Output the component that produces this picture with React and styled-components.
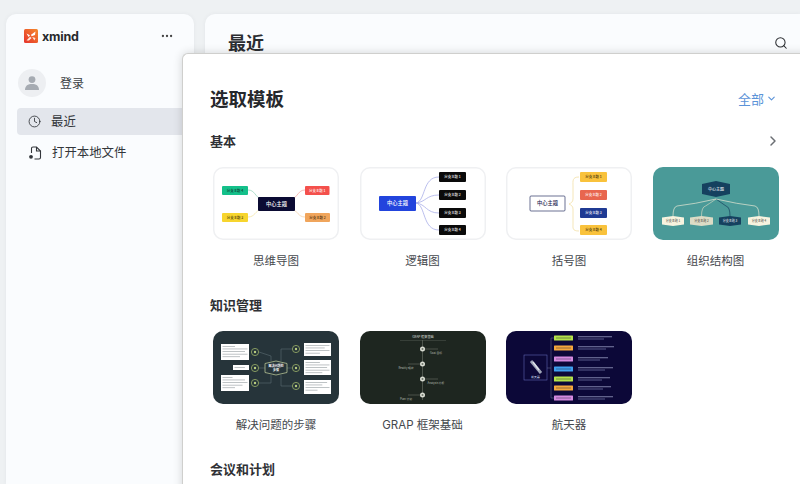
import React from 'react';
import styled, { createGlobalStyle } from 'styled-components';
import { Clock, MoreHorizontal, Search, ChevronDown, ChevronRight } from 'lucide-react';

const GlobalStyle = createGlobalStyle`
  html, body {
    margin: 0;
    padding: 0;
    height: 100%;
    overflow: hidden;
    background: #eef1f3;
    font-family: Inter, "Noto Sans CJK SC", sans-serif;
  }
`;

const Page = styled.div`
  position: relative;
  display: flex;
  gap: 11px;
  width: 800px;
  height: 484px;
  padding: 14px 0 0 6px;
  box-sizing: border-box;
  overflow: hidden;
`;

const Sidebar = styled.aside`
  flex: 0 0 188px;
  padding: 15px 0 0 11px;
  box-sizing: border-box;
  background: #fafcfe;
  border-radius: 10px 10px 0 0;
  box-shadow: 0 0 4px rgba(60, 70, 80, 0.06);
`;

const LogoRow = styled.div`
  display: flex;
  align-items: center;
  height: 14px;
  padding-left: 7px;
`;

const Wordmark = styled.span`
  margin-left: 4px;
  font: 700 12.5px Inter, sans-serif;
  letter-spacing: -0.2px;
  color: #26282c;
`;

const MoreButton = styled.span`
  display: flex;
  margin-left: auto;
  margin-right: 20px;
  color: #444;
`;

const UserRow = styled.div`
  display: flex;
  align-items: center;
  gap: 14px;
  margin: 26px 0 11px 1px;
  font-size: 12px;
  color: #3c3f44;
`;

const Avatar = styled.span`
  display: flex;
  align-items: center;
  justify-content: center;
  width: 28px;
  height: 28px;
  border-radius: 50%;
  background: #edeff2;
`;

const RowLabel = styled.span`
  margin-bottom: 2px;
`;

const NavItem = styled.div`
  display: flex;
  align-items: center;
  gap: 10px;
  height: 27px;
  margin-bottom: 4px;
  padding-left: 11px;
  border-radius: 4px 0 0 4px;
  font-size: 12.4px;
  color: #33363b;
  background: ${(p) => (p.$active ? '#e3e6ec' : 'transparent')};
`;

const Main = styled.main`
  flex: 1;
  display: flex;
  justify-content: space-between;
  padding: 15px 12px 0 23px;
  background: #fafcfe;
  border-radius: 10px 0 0 0;
  box-shadow: 0 0 4px rgba(60, 70, 80, 0.06);
`;

const MainTitle = styled.h1`
  margin: 1px 0 0;
  font-size: 18px;
  line-height: 28px;
  font-weight: 700;
  color: #2b2d31;
`;

const SearchButton = styled.span`
  display: flex;
  margin-top: 7px;
  color: #2b2d31;
`;

const Dialog = styled.section`
  position: absolute;
  left: 182px;
  top: 53px;
  width: 640px;
  height: 460px;
  padding: 30px 0 0 27px;
  box-sizing: border-box;
  background: #fff;
  border-radius: 6px 0 0 0;
  border: 1px solid #cfcfcd;
  border-width: 1px 0 0 1px;
  box-shadow: 0 0 10px rgba(0, 0, 0, 0.16);
`;

const DialogHead = styled.div`
  display: flex;
  align-items: center;
  justify-content: space-between;
  width: 567px;
  height: 28px;
  margin-bottom: 19px;
`;

const DialogTitle = styled.h2`
  margin: 0;
  font-size: 18.5px;
  font-weight: 700;
  color: #26282c;
`;

const AllFilter = styled.span`
  display: flex;
  align-items: center;
  gap: 2px;
  font-size: 13px;
  color: #5b93d8;
`;

const SectionHead = styled.div`
  display: flex;
  align-items: center;
  justify-content: space-between;
  width: 571px;
  height: 20px;
  margin-bottom: 16px;
`;

const SectionTitle = styled.h3`
  margin: 0;
  font-size: 13px;
  line-height: 20px;
  font-weight: 700;
  color: #2f3135;
`;

const MoreArrow = styled.span`
  display: flex;
  color: #6b6e73;
`;

const CardGrid = styled.div`
  display: grid;
  grid-template-columns: repeat(4, 126px);
  column-gap: 20.5px;
  margin: 0 0 25px 3px;
`;

const Card = styled.div`
  display: flex;
  flex-direction: column;
  align-items: center;
`;

const Thumb = styled.div`
  display: flex;
  width: 126px;
  height: 73px;
  margin-bottom: 12px;
  border-radius: 10px;
  overflow: hidden;
  background: ${(p) => p.$bg || '#fff'};
  box-shadow: ${(p) => (p.$bg ? 'none' : 'inset 0 0 0 1.5px #eff0f2')};
`;

const CardName = styled.span`
  font-size: 11.5px;
  line-height: 18px;
  color: #45484d;
`;

const Diagram = ({ children }) => (
  <svg width="100%" height="100%" viewBox="0 -1 126 73" fontFamily='"Noto Sans CJK SC", sans-serif'>
    {children}
  </svg>
);

const Topic = ({ x, y, w, h, fill, color, size = 3.4, r = 1, label, stroke }) => (
  <g>
    <rect x={x} y={y} width={w} height={h} rx={r} fill={fill} stroke={stroke} strokeWidth={stroke ? 0.7 : 0} />
    <text x={x + w / 2} y={y + h / 2 + size * 0.36} fontSize={size} fill={color} textAnchor="middle" fontWeight="500">
      {label}
    </text>
  </g>
);

const Hex = ({ x, y, w, h, fill, stroke, cut = 2 }) => (
  <polygon
    points={`${x},${y + cut} ${x + w / 2},${y} ${x + w},${y + cut} ${x + w},${y + h - cut} ${x + w / 2},${y + h} ${x},${y + h - cut}`}
    fill={fill}
    stroke={stroke}
    strokeWidth={stroke ? 0.7 : 0}
  />
);

const MindMap = () => (
  <Diagram>
    <g fill="none" strokeWidth="0.7">
      <path d="M35 22 C42 22 42 29 48 31" stroke="#8fd3b8" />
      <path d="M92 22 C85 22 85 29 79 31" stroke="#f2a09a" />
      <path d="M35 49 C42 49 42 43 48 41" stroke="#f3e29a" />
      <path d="M92 49 C85 49 85 43 79 41" stroke="#f3cda0" />
    </g>
    <Topic x={45} y={29} w={37} h={14} fill="#0b0b33" color="#fff" size={5.2} label="中心主题" />
    <Topic x={9} y={18} w={26} h={9} fill="#14c08a" color="#10332a" label="分支主题 4" />
    <Topic x={92} y={18} w={24.5} h={9} fill="#f4504c" color="#fff" label="分支主题 1" />
    <Topic x={9} y={45} w={26} h={9} fill="#f7d52e" color="#3a3208" label="分支主题 3" />
    <Topic x={92} y={45} w={25} h={9} fill="#f0a55c" color="#3c2608" label="分支主题 2" />
  </Diagram>
);

const LogicChart = () => (
  <Diagram>
    <g fill="none" stroke="#a9aee8" strokeWidth="0.8">
      <path d="M56 35 C66 33 62 9 79 9" />
      <path d="M56 35 C66 34 66 27 79 27" />
      <path d="M56 35 C66 36 66 45 79 45" />
      <path d="M56 35 C66 37 62 62 79 62" />
    </g>
    <Topic x={19} y={28} w={37} h={15} fill="#2244dd" color="#fff" size={5.2} label="中心主题" />
    {[1, 2, 3, 4].map((n, i) => (
      <Topic key={n} x={79} y={[4, 22, 40, 57][i]} w={27} h={10} fill="#0a0a0a" color="#fff" label={`分支主题 ${n}`} />
    ))}
  </Diagram>
);

const BraceMap = () => (
  <Diagram>
    <path d="M73 9 C66 9 67 13 67 18 L67 31 C67 34 65 35 63 36 C65 37 67 38 67 41 L67 56 C67 60 66 63 73 63" fill="none" stroke="#f3dfa6" strokeWidth="0.8" />
    <Topic x={24} y={28} w={35} h={15} fill="#fff" stroke="#2c3566" color="#1c2450" size={5.2} label="中心主题" />
    <Topic x={74} y={4} w={27} h={10} fill="#f9c23c" color="#3a2c08" label="分支主题 1" />
    <Topic x={74} y={22} w={27} h={10} fill="#e8664f" color="#fff" label="分支主题 2" />
    <Topic x={74} y={40} w={27} h={10} fill="#1f3a93" color="#fff" label="分支主题 3" />
    <Topic x={74} y={57} w={27} h={10} fill="#f9c23c" color="#3a2c08" label="分支主题 4" />
  </Diagram>
);

const orgNodes = [
  { x: 9, w: 22, fill: '#f7f3df', color: '#333', n: 1, line: '#e8e8d4' },
  { x: 37, w: 23, fill: '#dcdcc6', color: '#333', n: 2, line: '#cfd6c0' },
  { x: 66, w: 22, fill: '#15415f', color: '#fff', n: 3, line: '#15415f' },
  { x: 95, w: 22, fill: '#f7f3df', color: '#333', n: 4, line: '#e8e8d4' },
];

const OrgChart = () => (
  <Diagram>
    <g fill="none" strokeWidth="0.7">
      {orgNodes.map((o) => {
        const cx = o.x + o.w / 2;
        return <path key={o.n} d={`M63 31 Q${(63 + cx) / 2} 36 ${cx + (cx < 63 ? 4 : -4)} 38 Q${cx} 39 ${cx} 48`} stroke={o.line} />;
      })}
    </g>
    <Hex x={49} y={13} w={28} h={16} fill="#15415f" cut={3} />
    <text x={63} y={22.8} fontSize={4} fill="#fff" textAnchor="middle">中心主题</text>
    {orgNodes.map((o) => (
      <g key={o.n}>
        <Hex x={o.x} y={48} w={o.w} h={10} fill={o.fill} cut={1.4} />
        <text x={o.x + o.w / 2} y={54.2} fontSize={3} fill={o.color} textAnchor="middle">{`分支主题 ${o.n}`}</text>
      </g>
    ))}
  </Diagram>
);

const Ring = ({ cx, cy }) => (
  <g>
    <circle cx={cx} cy={cy} r={3.6} fill="none" stroke="#9db36a" strokeWidth="0.8" />
    <circle cx={cx} cy={cy} r={1.2} fill="#b8cc80" />
  </g>
);

const Note = ({ x, y, w, h, lines }) => (
  <g>
    <rect x={x} y={y} width={w} height={h} fill="#fff" />
    {lines.map((l, i) => (
      <rect key={i} x={x + 1.5} y={y + 2 + i * 2.6} width={(w - 3) * l} height={0.7} fill="#a3a9ad" />
    ))}
  </g>
);

const ProblemSteps = () => (
  <Diagram>
    <g fill="none" stroke="#5c6c72" strokeWidth="0.6">
      <path d="M46 20 L58 24 L58 29" />
      <path d="M46 36 L52 36" />
      <path d="M46 51 L58 51 L58 43" />
      <path d="M79 17 L68 17 L68 29" />
      <path d="M74 36 L79 36" />
      <path d="M79 54 L68 54 L68 43" />
    </g>
    <Note x={8} y={12} w={28} h={16} lines={[0.5, 1, 0.9, 1, 0.7]} />
    <Note x={20} y={33} w={16} h={5} lines={[0.8]} />
    <Note x={8} y={43} w={28} h={16} lines={[0.4, 0.9, 1, 0.8, 0.5]} />
    <Note x={91} y={11} w={27} h={13} lines={[1, 0.8, 1, 0.6]} />
    <Note x={91} y={28} w={27} h={15} lines={[0.6, 1, 0.9, 1, 0.7]} />
    <Note x={91} y={48} w={27} h={14} lines={[0.9, 0.7, 1, 0.5]} />
    {[20, 36, 51].map((cy) => <Ring key={cy} cx={42} cy={cy} />)}
    {[17, 36, 54].map((cy) => <Ring key={cy} cx={83} cy={cy} />)}
    <Hex x={52} y={29} w={22} h={14} fill="#26343a" stroke="#c9d6a0" cut={2.5} />
    <text x={63} y={35} fontSize={3} fill="#fff" textAnchor="middle" fontWeight="700">解决问题的</text>
    <text x={63} y={39} fontSize={3} fill="#fff" textAnchor="middle" fontWeight="700">步骤</text>
  </Diagram>
);

const grapNodes = [
  { y: 17, side: 1, label: 'Goal 目标' },
  { y: 32, side: -1, label: 'Reality 现状' },
  { y: 47, side: 1, label: 'Analysis 分析' },
  { y: 63, side: -1, label: 'Plan 计划' },
];

const GrapFrame = () => (
  <Diagram>
    <text x={63} y={6.2} fontSize={3.2} fill="#d8dcd4" textAnchor="middle">GRAP 框架基础</text>
    <rect x={40} y={8} width={46} height={0.4} fill="#5f665e" />
    <rect x={62.2} y={8} width={0.6} height={60} fill="#6d746b" />
    {grapNodes.map((g) => (
      <g key={g.y}>
        <rect x={g.side > 0 ? 63 : 48} y={g.y - 0.2} width={15} height={0.4} fill="#8a9188" />
        <circle cx={62.5} cy={g.y} r={2.5} fill="#d9dcd2" />
        <circle cx={62.5} cy={g.y} r={1} fill="#6f766c" />
        <text x={g.side > 0 ? 76 : 46} y={g.y + 5} fontSize={2.8} fill="#b9bfb5" textAnchor="middle">{g.label}</text>
      </g>
    ))}
  </Diagram>
);

const spacecraftRows = [
  { y: 6, fill: '#b5e24a', w: 34 },
  { y: 16, fill: '#f5a83c', w: 36 },
  { y: 27, fill: '#d58ae0', w: 30 },
  { y: 37, fill: '#3fa0f0', w: 35 },
  { y: 47, fill: '#b5e24a', w: 32 },
  { y: 56, fill: '#f5a83c', w: 33 },
  { y: 66, fill: '#d58ae0', w: 35 },
];

const Spacecraft = () => (
  <Diagram>
    <rect x={18} y={23} width={23} height={25} fill="none" stroke="#6d74c8" strokeWidth="0.5" />
    <path d="M25 29 L35 41" stroke="#9fa6b8" strokeWidth="3" />
    <path d="M27 30 L33 38" stroke="#dfe3ea" strokeWidth="1.4" />
    <text x={29.5} y={46} fontSize={2.8} fill="#dfe3ff" textAnchor="middle">航天器</text>
    <path d="M41 36 L45 36 M45 6 L45 66 M45 6 L48 6 M45 66 L48 66" stroke="#6a6f96" strokeWidth="0.5" fill="none" />
    {spacecraftRows.map((r) => (
      <g key={r.y}>
        <rect x={48} y={r.y - 2.5} width={19} height={5} rx={0.6} fill={r.fill} />
        <rect x={50} y={r.y - 0.5} width={15} height={1} fill="rgba(30,30,60,0.45)" />
        <rect x={72} y={r.y - 1.6} width={r.w} height={0.8} fill="#9a9dc4" />
        <rect x={72} y={r.y + 0.6} width={r.w - 8} height={0.8} fill="#6a6e9e" />
      </g>
    ))}
  </Diagram>
);

const XmindLogo = () => (
  <svg width="14" height="14" viewBox="0 0 14 14">
    <defs>
      <linearGradient id="logoFill" x1="0" y1="1" x2="1" y2="0">
        <stop offset="0" stopColor="#e5322d" />
        <stop offset="1" stopColor="#f58a2c" />
      </linearGradient>
    </defs>
    <rect width="14" height="14" rx="1.5" fill="url(#logoFill)" />
    <path d="M2.5 4.5 L6 6.2 L4.6 8 Z M11.5 2.5 L11 6 L7.6 7.2 L7 5.8 Z" fill="#fff" />
    <path d="M2.5 11.5 L6 7.8 L7.6 9 L5 11.5 Z M8.2 8 L11.5 9 L10.4 11.4 Z" fill="#ffe9dc" />
  </svg>
);

const UserGlyph = () => (
  <svg width="16" height="16" viewBox="0 0 16 16" fill="#a6abb2">
    <circle cx="8" cy="4.6" r="3.4" />
    <path d="M1 15 C1 10.6 4 9 8 9 S15 10.6 15 15 Z" />
  </svg>
);

const OpenFileGlyph = () => (
  <svg width="14" height="14" viewBox="0 0 14 14" fill="none" stroke="#33363b" strokeWidth="1.1">
    <path d="M3.5 7 V2.6 C3.5 1.6 4.1 1 5 1 H8.5 L12.5 5 V11.5 C12.5 12.4 11.9 13 11 13 H6.5" />
    <path d="M8.5 1 V5 H12.5" />
    <circle cx="3" cy="10.8" r="1.9" fill="#33363b" stroke="none" />
  </svg>
);

const sections = [
  {
    title: '基本',
    arrow: true,
    cards: [
      { name: '思维导图', art: <MindMap /> },
      { name: '逻辑图', art: <LogicChart /> },
      { name: '括号图', art: <BraceMap /> },
      { name: '组织结构图', art: <OrgChart />, bg: '#4a9a98' },
    ],
  },
  {
    title: '知识管理',
    cards: [
      { name: '解决问题的步骤', art: <ProblemSteps />, bg: '#26343a' },
      { name: 'GRAP 框架基础', art: <GrapFrame />, bg: '#1e2620' },
      { name: '航天器', art: <Spacecraft />, bg: '#0c0838' },
    ],
  },
  { title: '会议和计划', cards: [] },
];

export default function App() {
  return (
    <Page>
      <GlobalStyle />
      <Sidebar>
        <LogoRow>
          <XmindLogo />
          <Wordmark>xmind</Wordmark>
          <MoreButton><MoreHorizontal size={14} /></MoreButton>
        </LogoRow>
        <UserRow>
          <Avatar><UserGlyph /></Avatar>
          <RowLabel>登录</RowLabel>
        </UserRow>
        <NavItem $active>
          <Clock size={13} strokeWidth={1.6} />
          <RowLabel>最近</RowLabel>
        </NavItem>
        <NavItem>
          <OpenFileGlyph />
          <RowLabel>打开本地文件</RowLabel>
        </NavItem>
      </Sidebar>
      <Main>
        <MainTitle>最近</MainTitle>
        <SearchButton><Search size={14} strokeWidth={1.8} /></SearchButton>
      </Main>
      <Dialog>
        <DialogHead>
          <DialogTitle>选取模板</DialogTitle>
          <AllFilter>全部<ChevronDown size={11} strokeWidth={2.4} /></AllFilter>
        </DialogHead>
        {sections.map((s) => (
          <div key={s.title}>
            <SectionHead>
              <SectionTitle>{s.title}</SectionTitle>
              {s.arrow && <MoreArrow><ChevronRight size={16} strokeWidth={2.2} /></MoreArrow>}
            </SectionHead>
            {s.cards.length > 0 && (
              <CardGrid>
                {s.cards.map((c) => (
                  <Card key={c.name}>
                    <Thumb $bg={c.bg}>{c.art}</Thumb>
                    <CardName>{c.name}</CardName>
                  </Card>
                ))}
              </CardGrid>
            )}
          </div>
        ))}
      </Dialog>
    </Page>
  );
}
